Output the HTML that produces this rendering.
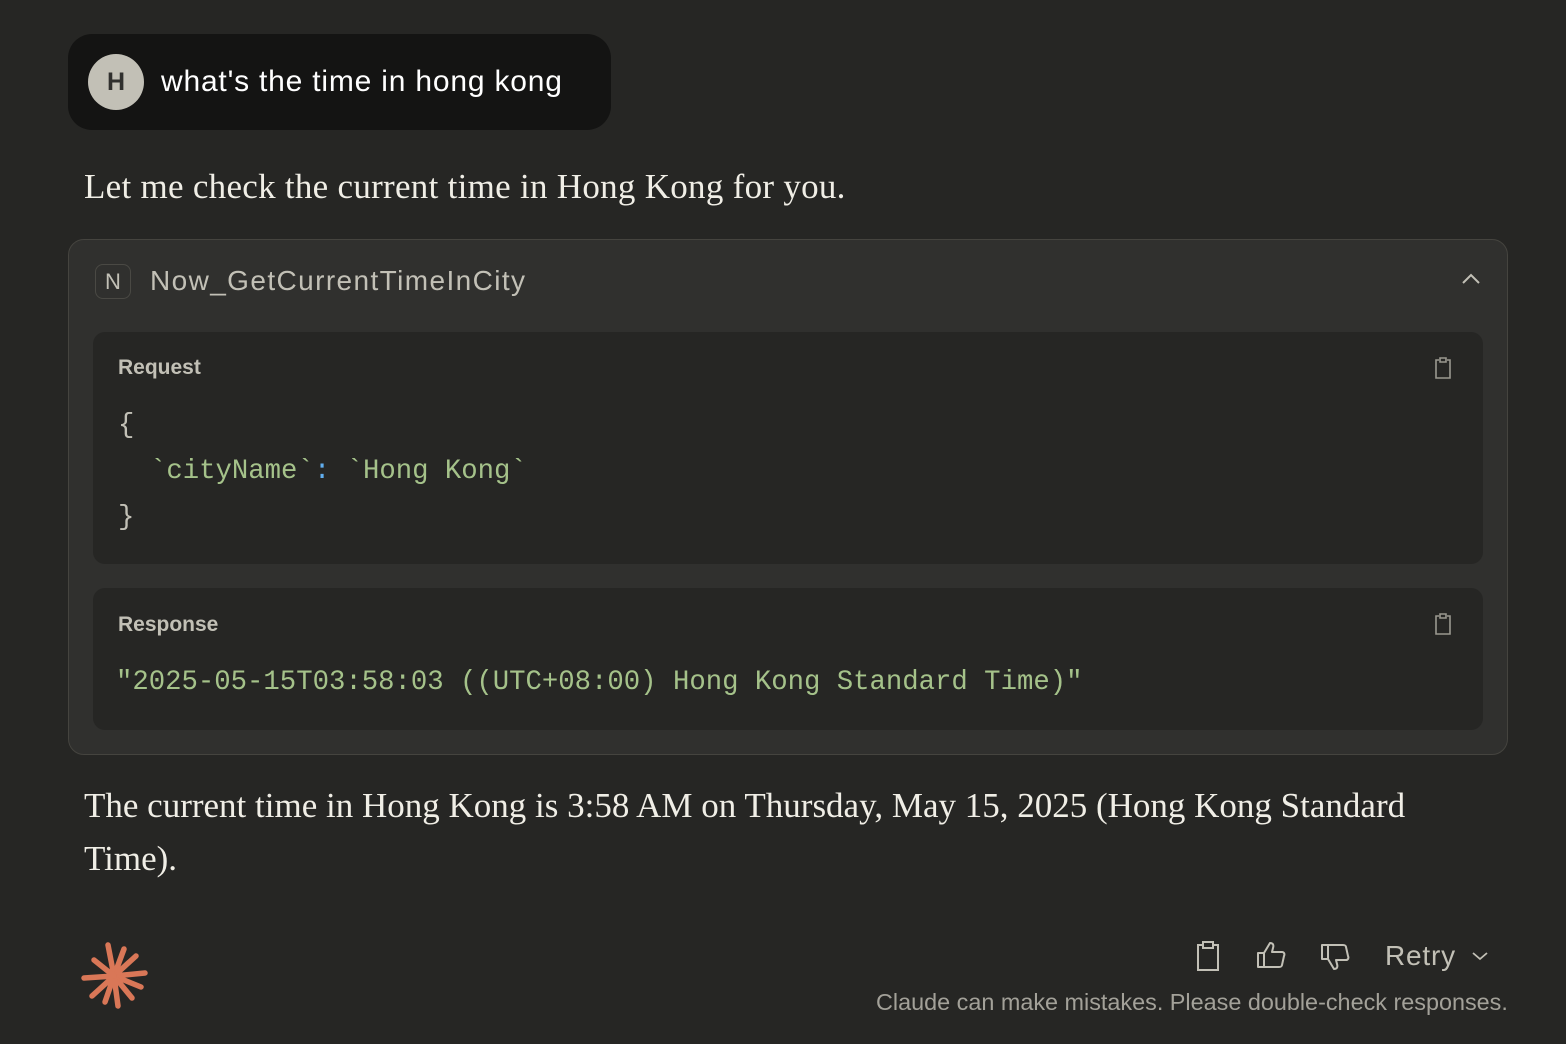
<!DOCTYPE html>
<html><head><meta charset="utf-8"><style>
*{margin:0;padding:0;box-sizing:border-box}
body{width:1566px;height:1044px;background:#262624;position:relative;overflow:hidden;font-family:"Liberation Sans",sans-serif;color:#f0eee6}
.abs{position:absolute}
.bubble{left:68px;top:34px;width:543px;height:96px;background:#141413;border-radius:24px}
.av{left:88px;top:54px;width:56px;height:56px;border-radius:50%;background:#c2c0b6;color:#30302e;font-weight:bold;font-size:25px;text-align:center;line-height:56px}
.serif{font-family:"Liberation Serif",serif;font-size:35px;color:#f0eee6;white-space:nowrap}
.card{left:68px;top:239px;width:1440px;height:516px;background:#30302e;border:1px solid #45443f;border-radius:16px}
.blk{background:#262624;border-radius:12px;left:93px;width:1390px}
.lbl{font-weight:bold;font-size:21px;color:#c2c0b6}
.mono{font-family:"Liberation Mono",monospace;font-size:27.3px;color:#a5c28a;white-space:pre}
</style></head><body>
<div class="abs bubble"></div>
<div class="abs av">H</div>
<div class="abs" style="left:161px;top:65px;font-size:30px;letter-spacing:0.8px;color:#fff">what's the time in hong kong</div>
<div class="abs serif" style="left:84px;top:167px;letter-spacing:0.28px">Let me check the current time in Hong Kong for you.</div>
<div class="abs card"></div>
<div class="abs" style="left:95px;top:264px;width:36px;height:35px;border:1px solid #4a4944;border-radius:8px;color:#c2c0b6;font-size:22px;text-align:center;line-height:33px">N</div>
<div class="abs" style="left:150px;top:265px;font-size:28px;letter-spacing:1.4px;color:#c2c0b6">Now_GetCurrentTimeInCity</div>
<svg class="abs" style="left:1460px;top:272px" width="22" height="14" viewBox="0 0 22 14"><path d="M3 11 L11 3 L19 11" fill="none" stroke="#c2c0b6" stroke-width="2"/></svg>
<div class="abs blk" style="top:332px;height:232px"></div>
<div class="abs lbl" style="left:118px;top:356px">Request</div>
<div class="abs mono" style="left:118px;top:410px;color:#c2c0b6">{</div>
<div class="abs mono" style="left:150px;top:456px">`cityName`<span style="color:#61aeee">:</span> `Hong Kong`</div>
<div class="abs mono" style="left:118px;top:502px;color:#c2c0b6">}</div>
<div class="abs blk" style="top:588px;height:142px"></div>
<div class="abs lbl" style="left:118px;top:613px">Response</div>
<div class="abs mono" style="left:116px;top:667px">"2025-05-15T03:58:03 ((UTC+08:00) Hong Kong Standard Time)"</div>
<svg class="abs" style="left:1433px;top:356px" width="20" height="24" viewBox="0 0 20 24"><path d="M6 4H3v18h14V4h-3M7 2h6v4H7z" fill="none" stroke="#9a988f" stroke-width="1.6"/></svg>
<svg class="abs" style="left:1433px;top:612px" width="20" height="24" viewBox="0 0 20 24"><path d="M6 4H3v18h14V4h-3M7 2h6v4H7z" fill="none" stroke="#9a988f" stroke-width="1.6"/></svg>
<div class="abs serif" style="left:84px;top:779px;line-height:53px">The current time in Hong Kong is 3:58 AM on Thursday, May 15, 2025 (Hong Kong Standard<br>Time).</div>
<svg class="abs" style="left:80px;top:942px" width="68" height="68" viewBox="-34 -34 68 68">
<g stroke="#d97757" stroke-width="5.5" stroke-linecap="round">
<line x1="0" y1="0" x2="-6" y2="-31"/><line x1="0" y1="0" x2="10" y2="-27"/><line x1="0" y1="0" x2="22" y2="-20"/><line x1="0" y1="0" x2="31" y2="-3"/><line x1="0" y1="0" x2="27" y2="11"/><line x1="0" y1="0" x2="18" y2="22"/><line x1="0" y1="0" x2="4" y2="30"/><line x1="0" y1="0" x2="-9" y2="26"/><line x1="0" y1="0" x2="-22" y2="20"/><line x1="0" y1="0" x2="-30" y2="2"/><line x1="0" y1="0" x2="-20" y2="-16"/>
</g></svg>
<svg class="abs" style="left:1194px;top:940px" width="28" height="32" viewBox="0 0 28 32"><path d="M8 5H4v25h20V5h-4M9 2h10v6H9z" fill="none" stroke="#c2c0b6" stroke-width="2"/></svg>
<svg class="abs" style="left:1256px;top:940px" width="32" height="30" viewBox="0 0 32 30"><path d="M2 13h6v14H2zM8 13l6-10c3 0 4 2 3 5l-1 4h10c2 0 3 2 2 4l-2 9c0 1-1 2-3 2H8" fill="none" stroke="#c2c0b6" stroke-width="2" stroke-linejoin="round"/></svg>
<svg class="abs" style="left:1320px;top:942px" width="32" height="32" viewBox="0 0 32 32"><path d="M2 3h6v14H2zM8 17l6 10c3 0 4-2 3-5l-1-4h10c2 0 3-2 2-4l-2-9c0-1-1-2-3-2H8" fill="none" stroke="#c2c0b6" stroke-width="2" stroke-linejoin="round"/></svg>
<div class="abs" style="left:1385px;top:940px;font-size:28px;letter-spacing:0.8px;color:#c2c0b6">Retry</div>
<svg class="abs" style="left:1470px;top:950px" width="20" height="12" viewBox="0 0 20 12"><path d="M3 3l7 6 7-6" fill="none" stroke="#c2c0b6" stroke-width="1.8"/></svg>
<div class="abs" style="left:876px;top:989px;font-size:23.4px;color:#a3a199;white-space:nowrap">Claude can make mistakes. Please double-check responses.</div>
</body></html>
